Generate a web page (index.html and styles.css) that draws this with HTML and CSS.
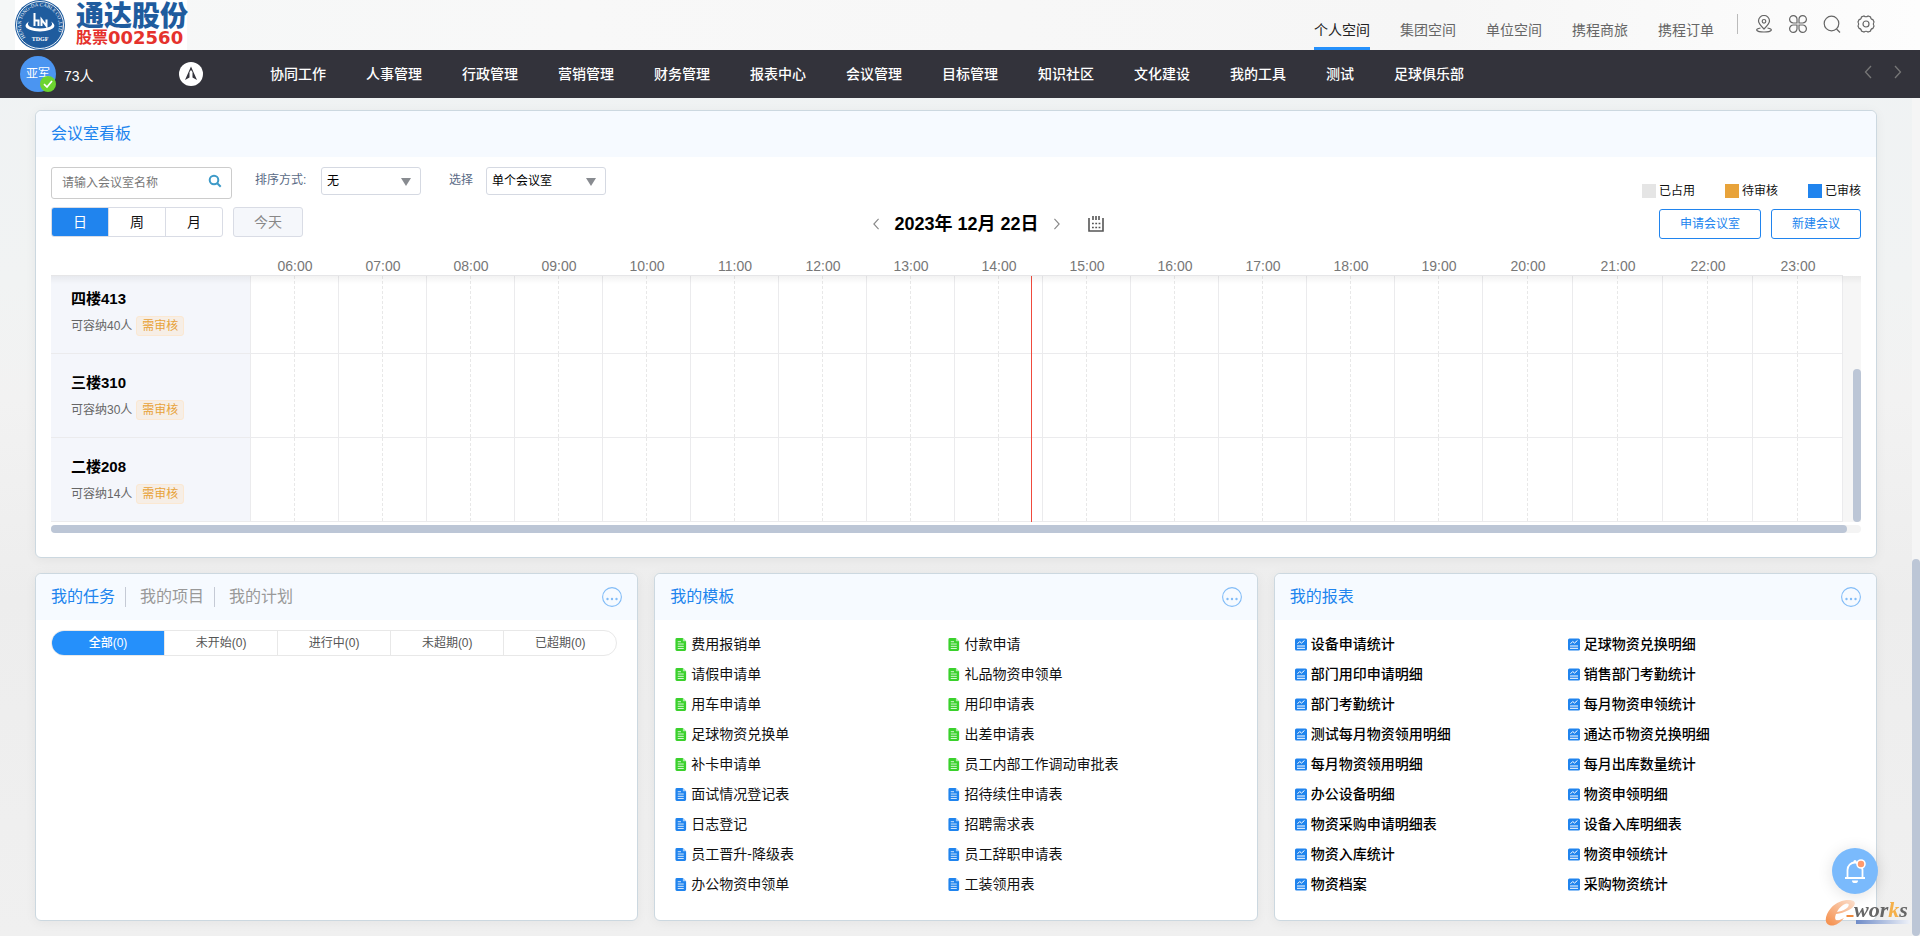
FILE: index.html
```html
<!DOCTYPE html>
<html lang="zh-CN">
<head>
<meta charset="utf-8">
<title>个人空间</title>
<link rel="stylesheet" href="styles.css">
</head>
<body>
<svg class="sprite" aria-hidden="true">
  <symbol id="doc" viewBox="0 0 12 14"><path d="M1.500 0H8L11.500 3.500V12.500A1.500 1.500 0 0 1 10 14H1.500A1.500 1.500 0 0 1 0 12.500V1.500A1.500 1.500 0 0 1 1.500 0Z" fill="currentColor"/><path d="M8 0 11.500 3.500H8Z" fill="#fff" opacity=".6"/><path d="M2.500 4H6M2.500 6.500H9M2.500 9H9M2.500 11.300H9" stroke="#fff" opacity=".85"/></symbol>
  <symbol id="chart" viewBox="0 0 12 12"><rect width="12" height="12" rx="1.500" fill="#2084ee"/><path d="M2.500 5.300 4.700 3 6.500 4.600 9.500 1.900" fill="none" stroke="#fff"/><path d="M2 7.500H10M2 9.800H10" stroke="#fff"/></symbol>
  <symbol id="more" viewBox="0 0 20 20"><circle cx="10" cy="10" r="9.400" fill="none" stroke="currentColor" stroke-width="1.100"/><circle cx="5.500" cy="12" r="1.200" fill="currentColor"/><circle cx="10" cy="12" r="1.200" fill="currentColor"/><circle cx="14.500" cy="12" r="1.200" fill="currentColor"/></symbol>
  <symbol id="left" viewBox="0 0 8 14"><path d="M7 1 1.500 7 7 13" fill="none" stroke="currentColor" stroke-width="1.300"/></symbol>
  <symbol id="right" viewBox="0 0 8 14"><path d="M1 1 6.500 7 1 13" fill="none" stroke="currentColor" stroke-width="1.300"/></symbol>
</svg>

<header class="top">
  <a class="logo" href="#">
    <svg class="emblem" viewBox="0 0 50 50" aria-hidden="true">
      <circle cx="25" cy="25" r="25" fill="#1f5c9e"/>
      <circle cx="25" cy="25" r="23.500" fill="none" stroke="#fff" stroke-width=".9"/>
      <path id="ring" d="M10.500 37.500A19 19 0 1 1 39.500 37.500" fill="none"/>
      <text class="ring-text"><textPath href="#ring">HENAN TONG-DA CABLE CO.,LTD</textPath></text>
      <path d="M14 21.500C8 25 9 30.500 25 31.500 41 30.500 42 25 36 21.500 39 25 36 28 25 28.500 14 28 11 25 14 21.500Z" fill="#fff"/>
      <path d="M19.500 13V26M19.500 20.500H23.500V26M26.500 26V19.500L31.500 26V19.500" fill="none" stroke="#fff" stroke-width="2"/>
      <text class="ring-name" x="25" y="41" text-anchor="middle">TDGF</text>
    </svg>
    <span class="brand"><strong class="brand-name">通达股份</strong><span class="brand-code">股票<b class="digits">002560</b></span></span>
  </a>
  <nav class="spaces" aria-label="空间">
    <a class="space current" href="#">个人空间</a><a class="space" href="#">集团空间</a><a class="space" href="#">单位空间</a><a class="space" href="#">携程商旅</a><a class="space" href="#">携程订单</a>
  </nav>
  <div class="tools">
    <button class="tool" aria-label="位置"><svg viewBox="0 0 18 18"><path d="M9 14C5.500 10.500 3.500 8.500 3.500 6A5.500 5.500 0 0 1 14.500 6C14.500 8.500 12.500 10.500 9 14Z"/><circle cx="9" cy="6.300" r="1.800"/><path d="M5.500 13C-.5 14 .5 17 9 17S18.500 14 12.500 13"/></svg></button>
    <button class="tool" aria-label="应用"><svg viewBox="0 0 18 18"><path d="M8 8H4.500A3.700 3.700 0 1 1 8 4.500ZM10 8V4.500A3.700 3.700 0 1 1 13.500 8ZM8 10V13.500A3.700 3.700 0 1 1 4.500 10ZM10 10H13.500A3.700 3.700 0 1 1 10 13.500Z"/></svg></button>
    <button class="tool" aria-label="搜索"><svg viewBox="0 0 18 18"><circle cx="8.500" cy="8.500" r="7.300"/><path d="M13.500 14 17 17.500"/></svg></button>
    <button class="tool" aria-label="设置"><svg viewBox="0 0 18 18"><path d="M7 1Q9 2.500 11 1L13.500 2Q13.700 4.400 16 4.700L17 7Q15.500 9 17 11L16 13.300Q13.700 13.600 13.500 16L11 17Q9 15.500 7 17L4.500 16Q4.300 13.600 2 13.300L1 11Q2.500 9 1 7L2 4.700Q4.300 4.400 4.500 2Z"/><circle cx="9" cy="9" r="3"/></svg></button>
  </div>
</header>

<div class="menu">
  <div class="user">
    <span class="avatar">亚军<svg class="online" viewBox="0 0 16 16" aria-hidden="true"><circle cx="8" cy="8" r="8" fill="#6cd42f"/><path d="M4 8.200 7 11 12 5" fill="none" stroke="#fff" stroke-width="1.700"/></svg></span>
    <span class="count">73人</span>
    <svg class="compass" viewBox="0 0 24 24" aria-hidden="true"><circle cx="12" cy="12" r="12" fill="#fff"/><path d="M12 4.500 18 18 13.500 15.500V10L12 8 10.500 10V15.500L6 18Z" fill="#33333b"/></svg>
  </div>
  <nav class="modules" aria-label="主菜单">
    <a href="#">协同工作</a><a href="#">人事管理</a><a href="#">行政管理</a><a href="#">营销管理</a><a href="#">财务管理</a><a href="#">报表中心</a><a href="#">会议管理</a><a href="#">目标管理</a><a href="#">知识社区</a><a href="#">文化建设</a><a href="#">我的工具</a><a href="#">测试</a><a href="#">足球俱乐部</a>
  </nav>
  <div class="pager">
    <button aria-label="向左"><svg><use href="#left"/></svg></button>
    <button aria-label="向右"><svg><use href="#right"/></svg></button>
  </div>
</div>

<main class="page">
  <section class="card">
    <div class="card-head"><h2 class="title">会议室看板</h2></div>
    <div class="board">
      <div class="bar">
        <div class="search">
          <input type="text" placeholder="请输入会议室名称" aria-label="会议室名称">
          <svg class="lens" viewBox="0 0 14 14" aria-hidden="true"><circle cx="6" cy="6" r="4.300"/><path d="M9 9 12.700 12.700"/></svg>
        </div>
        <label class="field-label" for="sort">排序方式:</label>
        <div class="select"><select id="sort"><option>无</option></select></div>
        <label class="field-label second" for="mode">选择</label>
        <div class="select wide"><select id="mode"><option>单个会议室</option></select></div>
        <ul class="legend">
          <li><i class="swatch used"></i>已占用</li><li><i class="swatch wait"></i>待审核</li><li><i class="swatch done"></i>已审核</li>
        </ul>
      </div>
      <div class="bar between">
        <div class="range">
          <div class="range-group"><button class="on">日</button><button>周</button><button>月</button></div>
          <button class="today">今天</button>
        </div>
        <div class="date">
          <button aria-label="前一天"><svg class="chev"><use href="#left"/></svg></button>
          <strong>2023年 12月 22日</strong>
          <button aria-label="后一天"><svg class="chev"><use href="#right"/></svg></button>
          <button class="pick" aria-label="选择日期"><svg class="cal" viewBox="0 0 16 16"><path d="M1 2V15H15V2M5 0V4M8 0V4M11 0V4" fill="none" stroke="#555" stroke-width="1.600"/><path d="M4 7.500H12.500M4 11.500H12.500" stroke="#555" stroke-width="1.600" stroke-dasharray="1.800 1.500"/></svg></button>
        </div>
        <div class="actions"><button>申请会议室</button><button>新建会议</button></div>
      </div>

      <div class="schedule">
        <div class="grid-wrap">
          <table class="grid">
            <colgroup><col class="c-room"><col class="c-hour" span="14"><col class="c-late" span="4"></colgroup>
            <thead><tr><td></td><th>06:00</th><th>07:00</th><th>08:00</th><th>09:00</th><th>10:00</th><th>11:00</th><th>12:00</th><th>13:00</th><th>14:00</th><th>15:00</th><th>16:00</th><th>17:00</th><th>18:00</th><th>19:00</th><th>20:00</th><th>21:00</th><th>22:00</th><th>23:00</th></tr></thead>
            <tbody>
              <tr class="cut"><th scope="row"><span class="room">四楼413</span><span class="cap">可容纳40人<em class="tag">需审核</em></span></th><td></td><td></td><td></td><td></td><td></td><td></td><td></td><td></td><td></td><td></td><td></td><td></td><td></td><td></td><td></td><td></td><td></td><td></td></tr>
              <tr><th scope="row"><span class="room">三楼310</span><span class="cap">可容纳30人<em class="tag">需审核</em></span></th><td></td><td></td><td></td><td></td><td></td><td></td><td></td><td></td><td></td><td></td><td></td><td></td><td></td><td></td><td></td><td></td><td></td><td></td></tr>
              <tr><th scope="row"><span class="room">二楼208</span><span class="cap">可容纳14人<em class="tag">需审核</em></span></th><td></td><td></td><td></td><td></td><td></td><td></td><td></td><td></td><td></td><td></td><td></td><td></td><td></td><td></td><td></td><td></td><td></td><td></td></tr>
            </tbody>
          </table>
          <i class="now" style="left:54.7%"></i>
        </div>
        <div class="gutter"><i class="v-thumb"></i></div>
        <i class="shade"></i>
      </div>
      <div class="h-track"><i class="h-thumb"></i></div>
    </div>
  </section>

  <div class="columns">
    <section class="card">
      <div class="card-head">
        <div class="tabs"><button class="title">我的任务</button><button class="title off">我的项目</button><button class="title off">我的计划</button></div>
        <button class="more" aria-label="更多"><svg><use href="#more"/></svg></button>
      </div>
      <div class="segments"><button class="on">全部(0)</button><button>未开始(0)</button><button>进行中(0)</button><button>未超期(0)</button><button>已超期(0)</button></div>
    </section>

    <section class="card">
      <div class="card-head"><h2 class="title">我的模板</h2><button class="more" aria-label="更多"><svg><use href="#more"/></svg></button></div>
      <ul class="links">
        <li class="green"><svg><use href="#doc"/></svg><a href="#">费用报销单</a></li><li class="green"><svg><use href="#doc"/></svg><a href="#">付款申请</a></li>
        <li class="green"><svg><use href="#doc"/></svg><a href="#">请假申请单</a></li><li class="green"><svg><use href="#doc"/></svg><a href="#">礼品物资申领单</a></li>
        <li class="green"><svg><use href="#doc"/></svg><a href="#">用车申请单</a></li><li class="green"><svg><use href="#doc"/></svg><a href="#">用印申请表</a></li>
        <li class="green"><svg><use href="#doc"/></svg><a href="#">足球物资兑换单</a></li><li class="green"><svg><use href="#doc"/></svg><a href="#">出差申请表</a></li>
        <li class="green"><svg><use href="#doc"/></svg><a href="#">补卡申请单</a></li><li class="green"><svg><use href="#doc"/></svg><a href="#">员工内部工作调动审批表</a></li>
        <li><svg><use href="#doc"/></svg><a href="#">面试情况登记表</a></li><li><svg><use href="#doc"/></svg><a href="#">招待续住申请表</a></li>
        <li><svg><use href="#doc"/></svg><a href="#">日志登记</a></li><li><svg><use href="#doc"/></svg><a href="#">招聘需求表</a></li>
        <li><svg><use href="#doc"/></svg><a href="#">员工晋升-降级表</a></li><li><svg><use href="#doc"/></svg><a href="#">员工辞职申请表</a></li>
        <li><svg><use href="#doc"/></svg><a href="#">办公物资申领单</a></li><li><svg><use href="#doc"/></svg><a href="#">工装领用表</a></li>
      </ul>
    </section>

    <section class="card">
      <div class="card-head"><h2 class="title">我的报表</h2><button class="more" aria-label="更多"><svg><use href="#more"/></svg></button></div>
      <ul class="links strong">
        <li><svg><use href="#chart"/></svg><a href="#">设备申请统计</a></li><li><svg><use href="#chart"/></svg><a href="#">足球物资兑换明细</a></li>
        <li><svg><use href="#chart"/></svg><a href="#">部门用印申请明细</a></li><li><svg><use href="#chart"/></svg><a href="#">销售部门考勤统计</a></li>
        <li><svg><use href="#chart"/></svg><a href="#">部门考勤统计</a></li><li><svg><use href="#chart"/></svg><a href="#">每月物资申领统计</a></li>
        <li><svg><use href="#chart"/></svg><a href="#">测试每月物资领用明细</a></li><li><svg><use href="#chart"/></svg><a href="#">通达币物资兑换明细</a></li>
        <li><svg><use href="#chart"/></svg><a href="#">每月物资领用明细</a></li><li><svg><use href="#chart"/></svg><a href="#">每月出库数量统计</a></li>
        <li><svg><use href="#chart"/></svg><a href="#">办公设备明细</a></li><li><svg><use href="#chart"/></svg><a href="#">物资申领明细</a></li>
        <li><svg><use href="#chart"/></svg><a href="#">物资采购申请明细表</a></li><li><svg><use href="#chart"/></svg><a href="#">设备入库明细表</a></li>
        <li><svg><use href="#chart"/></svg><a href="#">物资入库统计</a></li><li><svg><use href="#chart"/></svg><a href="#">物资申领统计</a></li>
        <li><svg><use href="#chart"/></svg><a href="#">物资档案</a></li><li><svg><use href="#chart"/></svg><a href="#">采购物资统计</a></li>
      </ul>
    </section>
  </div>
</main>

<div class="page-track" aria-hidden="true"><i class="page-thumb"></i></div>
<button class="bell" aria-label="消息"><svg viewBox="0 0 24 26"><path d="M4.500 20V12A7.500 7.500 0 0 1 19.500 12V20M2 20H22" fill="none" stroke="#fff" stroke-width="1.800"/><path d="M9 22.500H15A3 2.600 0 0 1 9 22.500Z" fill="#fff"/><circle cx="12" cy="3.500" r="1.600" fill="#fff"/><circle cx="18" cy="6" r="4" fill="#ff9a6c" stroke="#fff" stroke-width="1.600"/></svg></button>
<svg class="works" viewBox="0 0 86 30" role="img" aria-label="e-works">
  <defs>
    <linearGradient id="eg" x1="0" y1="1" x2="1" y2="0"><stop offset="0" stop-color="#f58b45"/><stop offset="1" stop-color="#fbe0cf"/></linearGradient>
    <linearGradient id="lg"><stop offset="0" stop-color="#6f8cc8"/><stop offset="1" stop-color="#eef1f8"/></linearGradient>
  </defs>
  <path d="M19 19C15 24 10 27 6 26.500-1 26-1 17 6 9 13 1 26-1 29.500 3 32 8 20 14 11 15 9 20 10 24 19 19ZM12 13C19 12 25 8 23.500 5 21 3 15 7 12 13Z" fill="url(#eg)"/>
  <rect x="21.500" y="16" width="7" height="2" fill="#f08a3c"/>
  <rect x="31" y="21" width="54" height="4" fill="url(#lg)"/>
  <text class="works-text" x="29" y="18">wor<tspan class="works-k">k</tspan>s</text>
</svg>
</body>
</html>
```

FILE: styles.css
```css
* { box-sizing: border-box; }
body {
  margin: 0;
  min-height: 100vh;
  font: 14px/20px "Liberation Sans", "Noto Sans CJK SC", sans-serif;
  color: #111;
  background: linear-gradient(#eff2f3 0, #f1f3f3 280px, #f2f2f2 400px, #ededed 600px, #f0f0f0 100%);
}
button { padding: 0; border: 0; background: none; font: inherit; color: inherit; cursor: pointer; }
a { color: inherit; text-decoration: none; }
ul { margin: 0; padding: 0; list-style: none; }
svg { display: block; }
.sprite { position: absolute; width: 0; height: 0; }

.top { display: flex; height: 50px; padding: 0 45px 0 15px; background: linear-gradient(90deg, #f5f7f7, #f8f8f8 30%, #f6f6f6 75%, #fdfdfd); }
.logo { display: flex; gap: 11px; width: 172px; background: #fff; margin-right: auto; }
.emblem { width: 50px; height: 50px; flex: none; }
.ring-text { font: 5px "Liberation Serif", serif; fill: #fff; }
.ring-name { font: bold 6px "Liberation Serif", serif; fill: #fff; }
.brand { display: flex; flex-direction: column; padding-top: 2px; white-space: nowrap; }
.brand-name { font-size: 28px; line-height: 30px; font-weight: 900; color: #1f5c9e; }
.brand-code { display: flex; font-size: 16px; line-height: 12px; font-weight: 700; color: #e5322d; }
.digits { font: bold 18px/12px "DejaVu Sans", sans-serif; }
.spaces { display: flex; gap: 30px; color: #666; }
.space { display: flex; align-items: flex-end; height: 50px; padding-bottom: 10px; }
.space.current { color: #222; padding-bottom: 7px; border-bottom: 3px solid #2590fb; }
.tools { display: flex; gap: 16px; height: 20px; margin: 14px 0 0 23px; padding-left: 17px; border-left: 1px solid #bbb; align-items: center; }
.tool svg { width: 18px; height: 18px; fill: none; stroke: #666; stroke-width: 1.2; }

.menu { display: flex; align-items: center; height: 48px; padding: 0 18px 0 20px; background: #33333b; color: #fff; }
.user { display: flex; align-items: center; width: 230px; }
.avatar { position: relative; width: 36px; height: 36px; border-radius: 50%; background: #4b95f1; font-size: 12px; line-height: 36px; text-align: center; }
.online { position: absolute; right: 0; bottom: 0; width: 16px; height: 16px; }
.count { width: 123px; padding-left: 8px; padding-top: 4px; }
.compass { width: 24px; height: 24px; }
.modules { display: flex; flex: 1; font-weight: 500; }
.modules a { padding: 0 20px; white-space: nowrap; }
.pager { display: flex; gap: 22px; color: #777; padding-bottom: 4px; }
.pager svg { width: 8px; height: 14px; }

.page { display: flex; flex-direction: column; gap: 15px; padding: 12px 43px 16px 35px; }
.card { border: 1px solid #ccd8e0; border-radius: 6px; background: #fff; box-shadow: 0 2px 12px rgba(0, 0, 0, .05); min-width: 0; }
.card-head { display: flex; align-items: center; justify-content: space-between; height: 46px; padding: 0 15px; background: #f6faff; border-radius: 6px 6px 0 0; }
.title { margin: 0; font-size: 16px; line-height: 20px; font-weight: 400; color: #2084ee; }
.title.off { color: #999; }

.board { padding: 10px 15px 24px; }
.bar { display: flex; align-items: flex-start; height: 32px; margin-bottom: 8px; font-size: 12px; }
.search { position: relative; width: 181px; }
.search input { width: 100%; height: 32px; padding: 0 32px 0 10px; border: 1px solid #ccc; border-radius: 3px; font: inherit; }
.search input::placeholder { color: #777; }
.lens { position: absolute; right: 10px; top: 7px; width: 14px; height: 14px; fill: none; stroke: #3d9ac8; stroke-width: 2; }
.field-label { width: 66px; margin-left: 23px; line-height: 26px; color: #596a85; }
.field-label.second { width: 37px; margin-left: 28px; }
.select { position: relative; width: 100px; }
.select.wide { width: 120px; }
.select select { appearance: none; width: 100%; height: 28px; padding: 0 5px; border: 1px solid #d5d9e2; border-radius: 3px; background: #fff; font: inherit; color: #000; }
.select::after { content: ""; position: absolute; right: 10px; top: 11px; border: 5px solid transparent; border-top: 8px solid #888b90; border-bottom: 0; pointer-events: none; }
.legend { display: flex; align-self: flex-end; gap: 30px; margin-left: auto; }
.legend li { display: flex; align-items: center; gap: 3px; line-height: 16px; height: 16px; }
.swatch { width: 14px; height: 14px; }
.used { background: #e5e5e5; }
.wait { background: #e8a33a; }
.done { background: #2084ee; }

.between { justify-content: space-between; }
.range { display: flex; gap: 10px; font-size: 14px; }
.range-group { display: flex; width: 172px; height: 30px; border: 1px solid #d9dce5; border-radius: 3px; overflow: hidden; }
.range-group button { flex: 1; border-left: 1px solid #d9dce5; }
.range-group .on { border-left: 0; background: #2084ee; color: #fff; }
.today { width: 70px; height: 30px; border: 1px solid #d9dce5; border-radius: 3px; background: #f5f7fb; color: #888; }
.date { display: flex; align-items: center; height: 34px; margin-left: 14px; color: #888; }
.date strong { margin: 0 14px; font-size: 18px; color: #000; }
.chev { width: 8px; height: 12px; }
.pick { margin-left: 27px; }
.cal { width: 16px; height: 16px; }
.actions { display: flex; gap: 10px; align-self: flex-end; }
.actions button { height: 30px; padding: 0 20px; border: 1px solid #2084ee; border-radius: 3px; color: #2084ee; }

.schedule { position: relative; display: flex; margin-top: 10px; }
.grid-wrap { position: relative; flex: 1; }
.grid { width: 100%; table-layout: fixed; border-collapse: separate; border-spacing: 0; }
.c-room { width: 200px; }
.c-hour { width: 88px; }
.c-late { width: 90px; }
.grid thead th, .grid thead td { height: 27px; padding: 8px 0 0; border-bottom: 1px solid #e6e6e8; font-weight: 400; line-height: 18px; color: #777; }
.grid tbody th { height: 84px; padding: 20px 0 0 20px; border: solid #ebebed; border-width: 0 1px 1px 0; background: #f4f6fb; text-align: left; vertical-align: top; font-weight: 400; }
.grid tbody .cut th { height: 78px; padding-top: 14px; }
.grid tbody td { padding: 0; border: solid #ebebed; border-width: 0 1px 1px 0; background: repeating-linear-gradient(#e8e8e8 0 3px, transparent 3px 5px) center / 1px 100% no-repeat; }
.room { display: block; font-size: 15px; font-weight: 700; line-height: 18px; color: #000; }
.cap { display: flex; align-items: center; gap: 4px; margin-top: 8px; font-size: 12px; color: #666; }
.tag { padding: 0 5px; border: 1px solid #fbe8d2; border-radius: 3px; background: #f6eee6; font-style: normal; line-height: 18px; color: #e8a33a; }
.now { position: absolute; top: 27px; bottom: 0; width: 1px; background: #f04a3c; }
.gutter { width: 18px; margin-top: 27px; display: flex; align-items: flex-end; justify-content: flex-end; background: #f6f6f6; }
.v-thumb { width: 8px; height: 62%; border-radius: 4px; background: #bcc6d6; }
.shade { position: absolute; left: 0; right: 0; top: 27px; height: 8px; background: linear-gradient(rgba(0, 0, 0, .05), transparent); }
.h-track { height: 8px; margin-top: 3px; border-radius: 4px; background: #f4f4f4; }
.h-thumb { display: block; width: 99.2%; height: 8px; border-radius: 4px; background: #bcc6d6; }

.columns { display: grid; grid-template-columns: repeat(3, 1fr); gap: 16px; }
.tabs { display: flex; }
.tabs .title + .title { margin-left: 10px; padding-left: 14px; border-left: 1px solid #c5cad5; }
.more { color: #82bcf7; }
.more svg { width: 20px; height: 20px; }
.segments { display: flex; height: 26px; margin: 10px 20px 0 15px; border: 1px solid #e8e8e8; border-radius: 13px; overflow: hidden; font-size: 12px; color: #555; }
.segments button { flex: 1; border-left: 1px solid #e8e8e8; }
.segments .on { border: 0; background: #2590fb; color: #fff; font-weight: 500; }
.links { display: grid; grid-template-columns: 1fr 1fr; padding: 9px 35px 21px 20px; }
.links li { display: flex; align-items: center; gap: 4px; height: 30px; color: #2084ee; }
.links li.green { color: #3ad12c; }
.links svg { width: 12px; height: 13px; }
.links a { color: #111; white-space: nowrap; }
.links.strong { font-weight: 500; }
.links.strong a { color: #000; }

.page-track { position: fixed; right: 0; top: 98px; bottom: 0; width: 8px; background: #f5f5f5; display: flex; align-items: flex-end; }
.page-thumb { width: 8px; height: 45%; border-radius: 4px; background: #bcc6d6; }
.bell { position: fixed; right: 42px; bottom: 42px; display: grid; place-items: center; width: 46px; height: 46px; border-radius: 50%; background: #7abafc; box-shadow: 0 2px 16px rgba(0, 0, 0, .12); }
.bell svg { width: 24px; height: 26px; }
.works { position: fixed; right: 9px; bottom: 7px; width: 86px; height: 30px; overflow: visible; }
.works-text { font: italic bold 22px "Liberation Serif", serif; fill: #666; }
.works-k { fill: #f5b04a; }
```
